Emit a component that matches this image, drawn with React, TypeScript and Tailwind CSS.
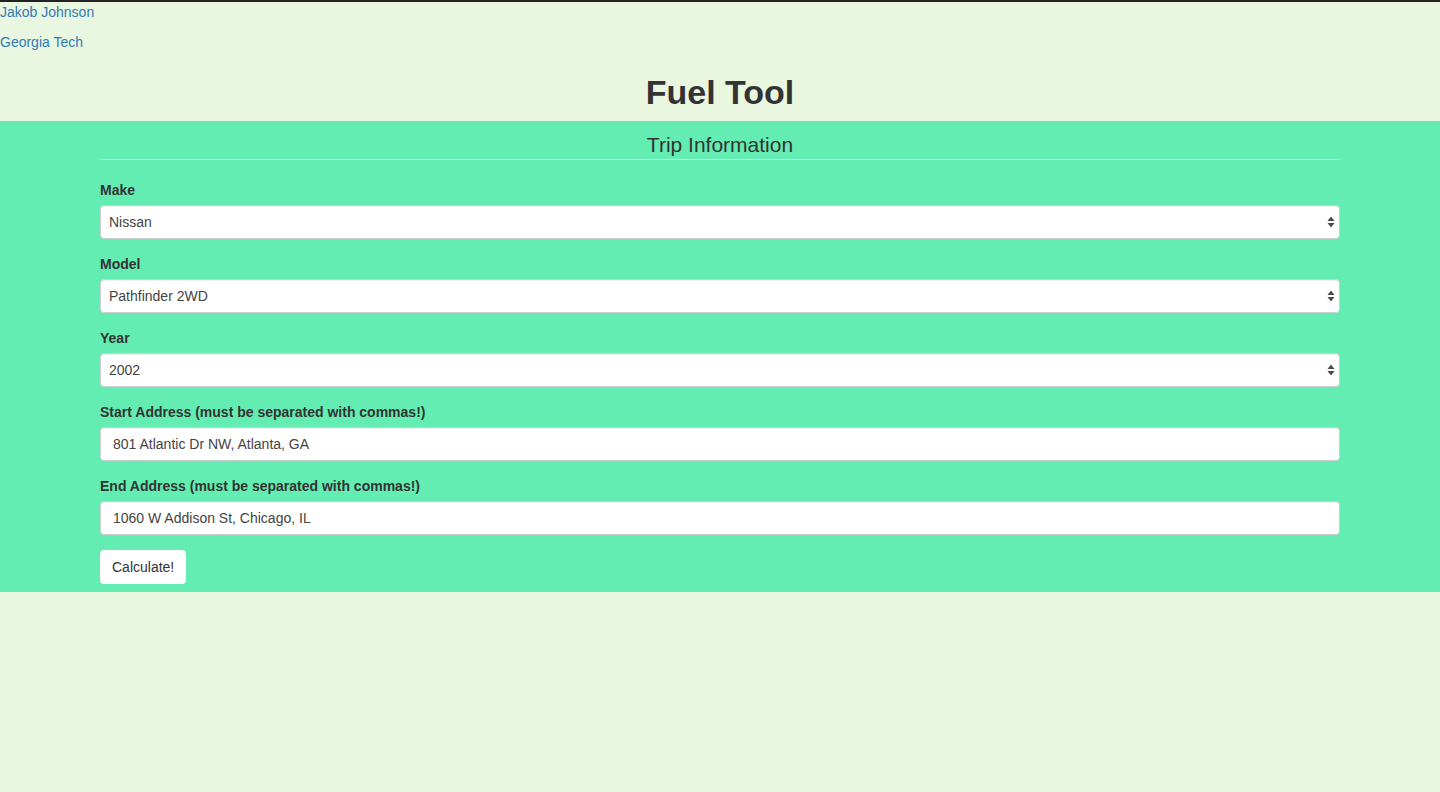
const font = { fontFamily: '"Liberation Sans", Helvetica, Arial, sans-serif' };

function Arrows() {
  return (
    <svg width="8" height="13" viewBox="0 0 8 13" className="absolute right-[4px] top-1/2 -translate-y-1/2 pointer-events-none">
      <path d="M4 1 L7.5 5.5 L0.5 5.5 Z" fill="#4a4a4a" />
      <path d="M4 12 L7.5 7.5 L0.5 7.5 Z" fill="#4a4a4a" />
    </svg>
  );
}

function SelectField({ label, value }: { label: string; value: string }) {
  return (
    <div className="mb-[15px]">
      <label className="block mb-[5px] text-[14px] leading-[20px] font-bold text-[#333]">{label}</label>
      <div className="relative h-[34px] rounded-[4px] bg-white border border-[#cfcfcf] shadow-[inset_0_1px_1px_rgba(0,0,0,0.075)] flex items-center pl-[8px] text-[14px] text-[#444]">
        {value}
        <Arrows />
      </div>
    </div>
  );
}

function InputField({ label, value }: { label: string; value: string }) {
  return (
    <div className="mb-[15px]">
      <label className="block mb-[5px] text-[14px] leading-[20px] font-bold text-[#333]">{label}</label>
      <input
        readOnly
        value={value}
        className="block w-full h-[34px] rounded-[4px] bg-white border border-[#cfcfcf] shadow-[inset_0_1px_1px_rgba(0,0,0,0.075)] px-[12px] text-[14px] text-[#444] outline-none"
        style={font}
      />
    </div>
  );
}

export default function App() {
  return (
    <div className="min-h-[792px] bg-[#e9f6e0] border-t-2 border-[#222]" style={font}>
      <p className="mb-[10px] text-[14px] leading-[20px]">
        <a href="#" className="text-[#337ab7]">Jakob Johnson</a>
      </p>
      <p className="mb-[10px] text-[14px] leading-[20px]">
        <a href="#" className="text-[#337ab7]">Georgia Tech</a>
      </p>
      <h1 className="mt-[20px] mb-[9px] text-center text-[34px] leading-[40px] font-bold text-[#333]">Fuel Tool</h1>
      <div className="bg-[#64edb2] pt-[9px] pb-[8px]">
        <div className="w-[1240px] mx-auto">
          <div className="text-center text-[21px] leading-[29px] text-[#333] border-b border-[#c9f5dc] mb-[20px]">
            Trip Information
          </div>
          <SelectField label="Make" value="Nissan" />
          <SelectField label="Model" value="Pathfinder 2WD" />
          <SelectField label="Year" value="2002" />
          <InputField label="Start Address (must be separated with commas!)" value="801 Atlantic Dr NW, Atlanta, GA" />
          <InputField label="End Address (must be separated with commas!)" value="1060 W Addison St, Chicago, IL" />
          <button className="h-[34px] px-[12px] rounded-[4px] bg-white text-[14px] text-[#333]">Calculate!</button>
        </div>
      </div>
    </div>
  );
}
